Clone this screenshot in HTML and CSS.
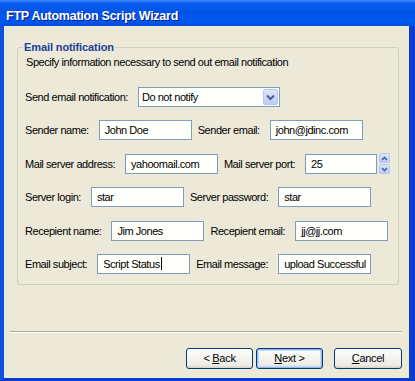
FILE: index.html
```html
<!DOCTYPE html>
<html lang="en">
<head>
    <meta charset="UTF-8">
    <title>FTP Automation Script Wizard</title>
    <link rel="stylesheet" href="styles.css">
</head>
<body>
    <div class="window">
        <div class="titlebar">FTP Automation Script Wizard</div>

        <div class="client">
            <fieldset class="group">
                <legend>Email notification</legend>
                <p class="intro">Specify information necessary to send out email notification</p>

                <div class="row first">
                    <span class="label">Send email notification:</span>
                    <div class="combo">
                        <span class="combo-text">Do not notify</span>
                        <span class="combo-btn">
                            <svg width="9" height="7" viewBox="0 0 9 7"><path d="M1 1.5 L4.5 5 L8 1.5" fill="none" stroke="#4d6185" stroke-width="2"/></svg>
                        </span>
                    </div>
                </div>

                <div class="row">
                    <span class="label">Sender name:</span>
                    <span class="field">John Doe</span>
                    <span class="label">Sender email:</span>
                    <span class="field">john@jdinc.com</span>
                </div>

                <div class="row">
                    <span class="label">Mail server address:</span>
                    <span class="field">yahoomail.com</span>
                    <span class="label">Mail server port:</span>
                    <span class="field port">25</span>
                    <span class="spin">
                        <span class="spin-btn">
                            <svg width="7" height="5" viewBox="0 0 7 5"><path d="M1 4 L3.5 1.5 L6 4" fill="none" stroke="#4d6185" stroke-width="1.6"/></svg>
                        </span>
                        <span class="spin-btn">
                            <svg width="7" height="5" viewBox="0 0 7 5"><path d="M1 1 L3.5 3.5 L6 1" fill="none" stroke="#4d6185" stroke-width="1.6"/></svg>
                        </span>
                    </span>
                </div>

                <div class="row">
                    <span class="label">Server login:</span>
                    <span class="field">star</span>
                    <span class="label">Server password:</span>
                    <span class="field">star</span>
                </div>

                <div class="row">
                    <span class="label">Recepient name:</span>
                    <span class="field">Jim Jones</span>
                    <span class="label">Recepient email:</span>
                    <span class="field">jj@jj.com</span>
                </div>

                <div class="row">
                    <span class="label">Email subject:</span>
                    <span class="field">Script Status<span class="caret"></span></span>
                    <span class="label">Email message:</span>
                    <span class="field">upload Successful</span>
                </div>
            </fieldset>

            <div class="separator"></div>

            <div class="buttons">
                <button class="btn">&lt; <u>B</u>ack</button>
                <button class="btn default"><u>N</u>ext &gt;</button>
                <button class="btn cancel"><u>C</u>ancel</button>
            </div>
        </div>
    </div>
</body>
</html>
```

FILE: styles.css
```css
body { margin: 0; background: #fff; font-family: "Liberation Sans", Arial, sans-serif; }

.window { width: 415px; height: 381px; display: flex; flex-direction: column; background: #0a3cd0; }

.titlebar {
    height: 26px; box-sizing: border-box; padding: 6px 0 0 6px;
    line-height: 20px; font-size: 12.5px; font-weight: bold; letter-spacing: -0.25px;
    color: #fff; text-shadow: 1px 1px 0 #0a1a8a;
    background: linear-gradient(180deg, #3c8cf8 0, #0a5ff0 12%, #0054e6 45%, #0058ee 80%, #004ee0 100%);
}

.client {
    flex: 1; display: flex; flex-direction: column;
    background: #ece9d8; font-size: 11px; letter-spacing: -0.45px; color: #000;
    border-left: 4px solid #0f52e2; border-right: 6px solid #0a3cd0; border-bottom: 3px solid #0a3cd0;
}

.group {
    margin: 15px 10px 0 13px; padding: 0 8px 10px 8px;
    border: 1px solid #d0d0bf; border-radius: 3px; min-width: 0;
}
.group legend {
    padding: 0 1px; margin-left: -3px; line-height: 13px;
    font-weight: bold; color: #21409a; letter-spacing: -0.1px;
}

.intro { margin: 2px 0 0; line-height: 13px; }

.row { display: flex; align-items: center; height: 20px; margin: 13.4px 0 0 -1px; white-space: nowrap; }
.row.first { margin-top: 18px; }

.label { margin-right: 10px; }
.field + .label { margin-left: 6px; }

.field {
    box-sizing: border-box; width: 93px; height: 20px; padding: 0 5px;
    line-height: 18px; background: #fffffb; border: 1px solid #7f9db9;
}
.field.port { width: 72px; }
.caret { display: inline-block; width: 1px; height: 13px; background: #000; vertical-align: -2px; margin-left: 1px; }

.combo {
    box-sizing: border-box; width: 142px; height: 20px; display: flex; align-items: center;
    background: #fffffb; border: 1px solid #7f9db9; padding: 0 1px 0 3px;
}
.combo-text { flex: 1; }
.combo-btn {
    box-sizing: border-box; width: 15px; height: 16px; display: flex; align-items: center; justify-content: center;
    background: linear-gradient(180deg, #dce6fd, #b9cdf9); border: 1px solid #b4c8f4; border-radius: 2px;
}

.spin { display: flex; flex-direction: column; gap: 1px; margin-left: 2px; }
.spin-btn {
    box-sizing: border-box; width: 11px; height: 10px; display: flex; align-items: center; justify-content: center;
    background: linear-gradient(180deg, #dce6fd, #b9cdf9); border: 1px solid #b4c8f4; border-radius: 2px;
}

.separator { margin: 46px 7px 0 6px; border-top: 1px solid #aca899; border-bottom: 1px solid #fff; }

.buttons { display: flex; justify-content: flex-end; gap: 3px; margin-top: 15px; padding-right: 7px; }
.btn {
    width: 67px; height: 21px; padding: 0; font: inherit; letter-spacing: -0.3px; color: #000;
    border: 1px solid #003c74; border-radius: 3px;
    background: linear-gradient(180deg, #ffffff 0, #f6f5f0 40%, #ecebe5 85%, #d6d0c5 100%);
}
.btn.default { box-shadow: inset 0 0 0 1px #99b8ef, inset 0 0 0 2px #c6d8f8; }
.btn.cancel { width: 68px; margin-left: 8px; }
```
